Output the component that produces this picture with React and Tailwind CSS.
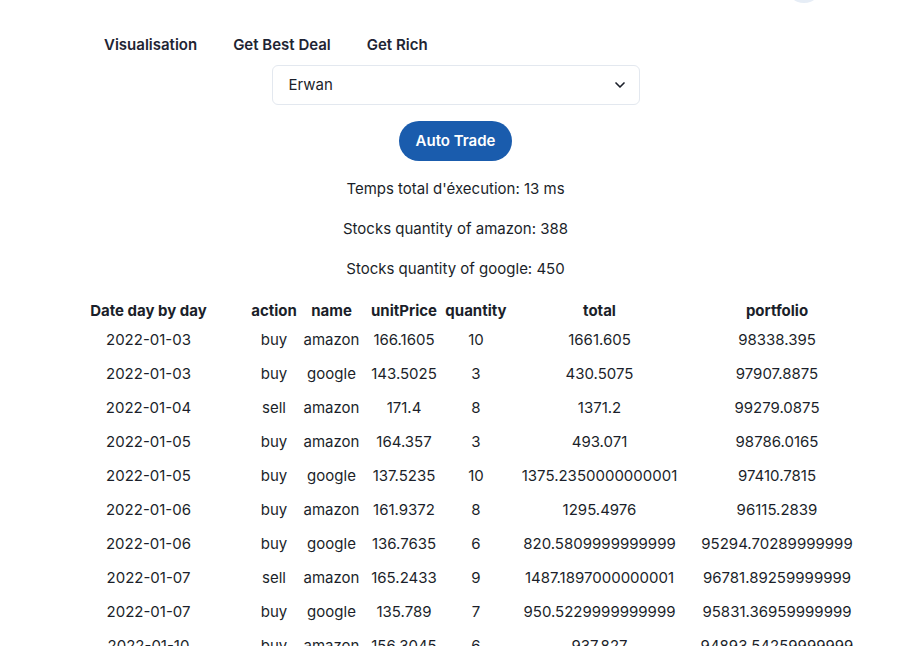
import React, { useState } from 'react';
import { ChevronDown } from 'lucide-react';

const trades = [
    ['2022-01-03', 'buy', 'amazon', '166.1605', '10', '1661.605', '98338.395'],
    ['2022-01-03', 'buy', 'google', '143.5025', '3', '430.5075', '97907.8875'],
    ['2022-01-04', 'sell', 'amazon', '171.4', '8', '1371.2', '99279.0875'],
    ['2022-01-05', 'buy', 'amazon', '164.357', '3', '493.071', '98786.0165'],
    ['2022-01-05', 'buy', 'google', '137.5235', '10', '1375.2350000000001', '97410.7815'],
    ['2022-01-06', 'buy', 'amazon', '161.9372', '8', '1295.4976', '96115.2839'],
    ['2022-01-06', 'buy', 'google', '136.7635', '6', '820.5809999999999', '95294.70289999999'],
    ['2022-01-07', 'sell', 'amazon', '165.2433', '9', '1487.1897000000001', '96781.89259999999'],
    ['2022-01-07', 'buy', 'google', '135.789', '7', '950.5229999999999', '95831.36959999999'],
    ['2022-01-10', 'buy', 'amazon', '156.3045', '6', '937.827', '94893.54259999999'],
];

const columns = [
    { label: 'Date day by day', width: 'w-[202px]' },
    { label: 'action', width: 'w-[49px]' },
    { label: 'name', width: 'w-[66px]' },
    { label: 'unitPrice', width: 'w-[79px]' },
    { label: 'quantity', width: 'w-[65px]' },
    { label: 'total', width: 'w-[182px]' },
    { label: 'portfolio', width: 'w-[173px]' },
];

const App = () => {
    const [user, setUser] = useState('Erwan');

    return (
        <div className="relative min-h-screen bg-white text-[15px] text-[#1b1f2a] pr-[5px]" style={{ fontFamily: 'Inter, "Noto Sans", sans-serif' }}>
            {/* avatar peeking from above */}
            <div className="absolute -top-[33px] left-[786px] w-9 h-9 rounded-full bg-[#e6edf6]"></div>

            {/* Nav */}
            <nav className="flex gap-9 pl-[104px] pt-[33px] font-semibold text-[#1e2433] leading-6">
                <a href="#">Visualisation</a>
                <a href="#">Get Best Deal</a>
                <a href="#">Get Rich</a>
            </nav>

            <div className="flex flex-col items-center mt-2">
                <div className="relative w-[368px]">
                    <select
                        value={user}
                        onChange={(e) => setUser(e.target.value)}
                        className="appearance-none w-full h-10 pl-4 pr-10 border border-[#e3e8ef] rounded-md bg-white text-[15px] outline-none"
                    >
                        <option>Erwan</option>
                        <option>Alice</option>
                    </select>
                    <ChevronDown className="absolute right-[12px] top-[12px] w-4 h-4 pointer-events-none" strokeWidth={2.5} />
                </div>

                <button className="mt-4 h-10 px-[17px] rounded-full bg-[#1a5cad] text-white font-semibold">
                    Auto Trade
                </button>

                <p className="mt-4 leading-6">Temps total d'éxecution: 13 ms</p>
                <p className="mt-4 leading-6">Stocks quantity of amazon: 388</p>
                <p className="mt-4 leading-6">Stocks quantity of google: 450</p>

                <table className="mt-[17px] table-fixed w-[816px] border-collapse">
                    <thead>
                        <tr className="h-[25px]">
                            {columns.map((c) => (
                                <th key={c.label} className={`${c.width} font-bold text-center p-0 leading-6`}>{c.label}</th>
                            ))}
                        </tr>
                    </thead>
                    <tbody>
                        {trades.map((row, i) => (
                            <tr key={i} className="h-[34px]">
                                {row.map((cell, j) => (
                                    <td key={j} className="text-center p-0 leading-6 whitespace-nowrap">{cell}</td>
                                ))}
                            </tr>
                        ))}
                    </tbody>
                </table>
            </div>
        </div>
    );
};

export default App;
